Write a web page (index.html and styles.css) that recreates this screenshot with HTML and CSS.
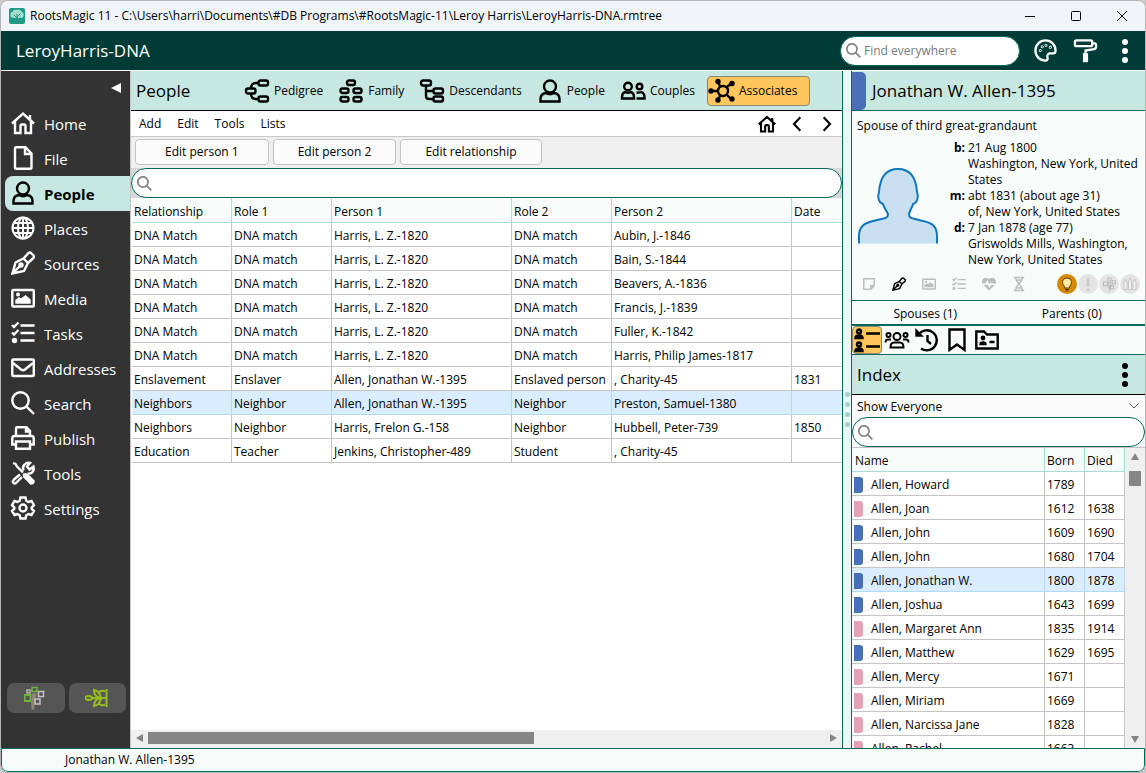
FILE: index.html
```html
<!DOCTYPE html>
<html lang="en">
<head>
    <meta charset="UTF-8">
    <meta name="viewport" content="width=device-width, initial-scale=1.0">
    <title>RootsMagic 11</title>
    <link rel="stylesheet" href="styles.css">
</head>
<body>

    <!-- Icons used more than once -->
    <svg class="symbols" aria-hidden="true">
        <symbol id="icon-search" viewBox="0 0 24 24">
            <circle cx="9.5" cy="9.5" r="8.2"/>
            <path d="M15.3 15.3 23 23"/>
        </symbol>
        <symbol id="icon-home" viewBox="0 0 24 24">
            <path d="M1 12.500 12 2.500 23 12.500M4 10.500V22H9.500V15Q9.500 13.500 11 13.500H13Q14.500 13.500 14.500 15V22H20V10.500M19 8.500V4"/>
        </symbol>
        <symbol id="icon-person" viewBox="0 0 24 24">
            <circle cx="12" cy="7.500" r="6"/>
            <path d="M8 14C4.500 14.500 2.500 16.500 2.500 20V22.500H21.500V20C21.500 16.500 19.500 14.500 16 14Q12 16.500 8 14Z"/>
        </symbol>
        <symbol id="icon-pen" viewBox="0 0 24 24">
            <path d="M1.500 22.500 4.500 11.500 12.500 7.500 17 12 13 20 1.500 22.500 9.500 14.500M12.500 7.500 17.500 2Q19 1 20.500 2.500L22.500 4.500Q23.500 6 22 7.500L17 12"/>
            <circle cx="10" cy="14" r="1.500"/>
        </symbol>
        <symbol id="icon-media" viewBox="0 0 24 24">
            <rect x="1.300" y="4" width="21.500" height="16.500" rx="1"/>
            <path class="solid" d="M5.500 16.500V14.500L8 12.500 10 14 14.500 10.500 18.500 14V16.500Z"/>
            <circle class="solid" cx="7" cy="8.500" r="0.800"/>
        </symbol>
        <symbol id="icon-tasks" viewBox="0 0 24 24">
            <path d="M9.500 4.500H23.500M9.500 12H23.500M9.500 19.500H23.500M1 4 3 6 7.500 1.500M1 11.500 3 13.500 7.500 9"/>
            <circle class="solid" cx="3.500" cy="19.500" r="1.500"/>
        </symbol>
        <symbol id="icon-tree" viewBox="0 0 24 24">
            <path d="M12 23V13M12 19 7 14M12 17 17 13"/>
            <rect x="9.500" y="1.500" width="5" height="5"/>
            <rect x="2.500" y="8" width="6" height="6"/>
            <rect x="10" y="9" width="4" height="4"/>
            <rect x="16.500" y="6" width="5" height="5"/>
            <rect x="13.500" y="14" width="5" height="5"/>
        </symbol>
    </svg>

    <div class="window">
        <header class="titlebar">
            <svg class="app-logo" viewBox="0 0 16 16">
                <rect width="16" height="16" rx="2" fill="#1f9a86"/>
                <path d="M1.500 8Q1 4 3.500 4 4 1 7.500 2 11 0.500 12.500 3.500 15.500 5 14.500 8 14 11 11 9.500 9 11 8 9 6 11 4.500 9.500 2 10.500 1.500 8Z" fill="#a5e0cf"/>
                <path d="M8 15V6M8 10 4.500 6.500M8 9 11.500 5.500M5.500 14.500H10.500" fill="none" stroke="#2c9080"/>
            </svg>
            <span class="titlebar-text">RootsMagic 11 - C:\Users\harri\Documents\#DB Programs\#RootsMagic-11\Leroy Harris\LeroyHarris-DNA.rmtree</span>
            <button class="window-button" aria-label="Minimize"><svg viewBox="0 0 12 12"><path d="M1 6.500H11"/></svg></button>
            <button class="window-button" aria-label="Maximize"><svg viewBox="0 0 12 12"><rect x="1.500" y="1.500" width="9" height="9" rx="1"/></svg></button>
            <button class="window-button" aria-label="Close"><svg viewBox="0 0 12 12"><path d="M1 1 11 11M11 1 1 11"/></svg></button>
        </header>

        <div class="appbar">
            <h1 class="database-name">LeroyHarris-DNA</h1>
            <div class="search-box find-everywhere">
                <svg class="icon"><use href="#icon-search"/></svg>
                <input type="text" aria-label="Find everywhere" placeholder="Find everywhere">
            </div>
            <button class="appbar-button" aria-label="Color theme">
                <svg class="icon" viewBox="0 0 24 24">
                    <path d="M12 1.500C6 1.500 1.500 6 1.500 12S6 22.500 12 22.500C14.500 22.500 14.500 20.500 14 19 13.500 16.500 15 15 17 15H20C22 15 22.500 13.500 22.500 12 22.500 6 18 1.500 12 1.500Z"/>
                    <circle cx="6.500" cy="12" r="0.400"/>
                    <circle cx="8.500" cy="8" r="0.400"/>
                    <circle cx="12.500" cy="6.500" r="0.400"/>
                    <circle cx="17" cy="8.500" r="0.400"/>
                </svg>
            </button>
            <button class="appbar-button" aria-label="Color coding">
                <svg class="icon" viewBox="0 0 24 24">
                    <rect x="1" y="1.500" width="18" height="6" rx="1.500"/>
                    <path d="M19 4.500H21.500Q23 4.500 23 6V8Q23 10 21 10.500L12 12V16"/>
                    <rect class="solid" x="10.500" y="16" width="3" height="7"/>
                </svg>
            </button>
            <button class="appbar-button" aria-label="Main menu">
                <svg class="dots" viewBox="0 0 8 26"><circle cx="4" cy="4" r="3"/><circle cx="4" cy="13" r="3"/><circle cx="4" cy="22" r="3"/></svg>
            </button>
        </div>

        <div class="workspace">
            <nav class="sidebar">
                <button class="collapse" aria-label="Collapse menu"></button>
                <a class="nav-item" href="#"><svg class="icon"><use href="#icon-home"/></svg>Home</a>
                <a class="nav-item" href="#"><svg class="icon" viewBox="0 0 24 24"><path d="M4 2.500Q4 1.300 5.200 1.300H14.500L20.500 7.500V21.500Q20.500 22.800 19 22.800H5.500Q4 22.800 4 21.500ZM14 1.500V8H20.500"/></svg>File</a>
                <a class="nav-item active" href="#"><svg class="icon"><use href="#icon-person"/></svg>People</a>
                <a class="nav-item" href="#"><svg class="icon globe" viewBox="0 0 24 24"><circle cx="12" cy="12" r="10.500"/><ellipse cx="12" cy="12" rx="5" ry="10.500"/><path d="M12 1.500V22.500M1.500 12H22.500M3 7H21M3 17H21"/></svg>Places</a>
                <a class="nav-item" href="#"><svg class="icon"><use href="#icon-pen"/></svg>Sources</a>
                <a class="nav-item" href="#"><svg class="icon"><use href="#icon-media"/></svg>Media</a>
                <a class="nav-item" href="#"><svg class="icon"><use href="#icon-tasks"/></svg>Tasks</a>
                <a class="nav-item" href="#"><svg class="icon" viewBox="0 0 24 24"><rect x="1.300" y="3.500" width="21.500" height="16.500" rx="1"/><path d="M2 7 10 13.500Q12 15 14 13.500L22 7"/></svg>Addresses</a>
                <a class="nav-item" href="#"><svg class="icon"><use href="#icon-search"/></svg>Search</a>
                <a class="nav-item" href="#"><svg class="icon" viewBox="0 0 24 24"><path d="M5 10V2.500Q5 1.300 6 1.300H15.500L19 5V10M5 18.500H1.300V12.500Q1.300 10 3.500 10H20.500Q22.700 10 22.700 12.500V18.500H19M5 15.500H19V22.700H5ZM15 2V5.500H19"/></svg>Publish</a>
                <a class="nav-item" href="#"><svg class="icon" viewBox="0 0 24 24"><path d="M9 13.500 3 18.500Q1 20.500 2.500 22 4 23.500 5.500 21.500L11 16M12.500 9.500Q11 6 13.500 3.500 16 1 19 2L16 5.500 18.500 8.500 22.500 5.500Q23.500 9 21 11.500 19 13 16.500 12.500"/><path d="M2 2 4.500 3 6 5.500 12 11.500"/><path class="solid" d="M13 13.500Q15 12.500 17 14.500L22.500 20Q22.500 22.500 20 22.500L14.500 17Q12.500 15.500 13 13.500Z"/></svg>Tools</a>
                <a class="nav-item" href="#"><svg class="icon" viewBox="0 0 24 24"><path d="M9.500 1.500H14.500L15.300 4.800 17.500 6 20.500 5 23 9.200 20.700 11.500V13L23 15 20.500 19 17.500 18 15.300 19.300 14.500 22.500H9.500L8.700 19.300 6.500 18 3.500 19 1 15 3.300 13V11.500L1 9.200 3.500 5 6.500 6 8.700 4.800Z"/><circle cx="12" cy="12" r="3.500"/></svg>Settings</a>
                <div class="sidebar-tools">
                    <button class="sidebar-button" aria-label="FamilySearch">
                        <svg viewBox="0 0 24 24" fill="none" stroke-width="1.500">
                            <path d="M9 23.500 8.500 15M9 17 10 8" stroke="#8f8478" stroke-width="3"/>
                            <rect x="8" y="1.500" width="5" height="4" stroke="#72b33c"/>
                            <rect x="3" y="4" width="3" height="3" stroke="#b5b0aa"/>
                            <rect x="0.500" y="9" width="6" height="6" stroke="#72b33c" stroke-width="2"/>
                            <rect x="8.500" y="8" width="3" height="3" stroke="#8f8478"/>
                            <rect x="14.500" y="5.500" width="5" height="5" stroke="#c8c6c3"/>
                            <rect x="11" y="13" width="5" height="5" stroke="#c8c6c3"/>
                        </svg>
                    </button>
                    <button class="sidebar-button" aria-label="Ancestry">
                        <svg viewBox="0 0 24 24" fill="none" stroke="#9abb20" stroke-width="2">
                            <path d="M21.500 3V21M8 12H21.500M-1 12Q4 8 8 12 4 16 -1 12ZM9 4Q15 5 16 12 9 11 9 4ZM9 20Q15 19 16 12 9 13 9 20ZM14 6Q17 4 20 5.500M14 18Q17 20 20 18.500"/>
                        </svg>
                    </button>
                </div>
            </nav>

            <main class="main-panel">
                <div class="view-bar">
                    <h2 class="panel-title">People</h2>
                    <div class="views">
                        <button class="view-button">
                            <svg class="icon" viewBox="0 0 24 24"><rect x="13.500" y="1.500" width="9.500" height="5" rx="2"/><rect x="1" y="9.500" width="9.500" height="5" rx="2"/><rect x="13.500" y="17.500" width="9.500" height="5" rx="2"/><path d="M13.500 4H11Q6 4 6 9.500M6 14.500Q6 20 11 20H13.500"/></svg>
                            Pedigree
                        </button>
                        <button class="view-button">
                            <svg class="icon" viewBox="0 0 24 24"><rect x="8" y="1.500" width="8" height="4.500" rx="2"/><rect x="1.500" y="9.500" width="8" height="4.500" rx="2"/><rect x="14.500" y="9.500" width="8" height="4.500" rx="2"/><rect x="1.500" y="18" width="8" height="4.500" rx="2"/><rect x="14.500" y="18" width="8" height="4.500" rx="2"/></svg>
                            Family
                        </button>
                        <button class="view-button">
                            <svg class="icon" viewBox="0 0 24 24"><rect x="1" y="1.500" width="10" height="5" rx="2"/><rect x="13.500" y="9.500" width="9.500" height="5" rx="2"/><rect x="13.500" y="17.500" width="9.500" height="5" rx="2"/><path d="M6 6.500V17Q6 20 9 20H13.500M6 12H13.500"/></svg>
                            Descendants
                        </button>
                        <button class="view-button">
                            <svg class="icon"><use href="#icon-person"/></svg>
                            People
                        </button>
                        <button class="view-button">
                            <svg class="icon" viewBox="0 0 24 24"><circle cx="7" cy="7.500" r="3.800"/><path d="M4.500 13Q1 14 1 18V19.500H13V18Q13 14 9.500 13 7 14.500 4.500 13Z"/><circle cx="18.500" cy="7.500" r="2.800"/><path d="M15.500 13.500Q18 14 20.500 13 23.500 14.500 23.500 18V19.500H15.500"/></svg>
                            Couples
                        </button>
                        <button class="view-button selected">
                            <svg class="icon" viewBox="0 0 24 24"><circle cx="13" cy="12" r="5"/><path d="M1 12H8M10.500 8 8 3M16.500 8.500 21 4.500M16.500 15.500 21 20M10.500 16 8 21"/><g class="solid"><circle cx="1" cy="12" r="1.500"/><circle cx="8" cy="2.500" r="1.500"/><circle cx="22" cy="4.500" r="1.500"/><circle cx="22" cy="20" r="1.500"/><circle cx="8" cy="21" r="1.500"/></g></svg>
                            Associates
                        </button>
                    </div>
                </div>

                <div class="menu-bar">
                    <button class="menu-item">Add</button>
                    <button class="menu-item">Edit</button>
                    <button class="menu-item">Tools</button>
                    <button class="menu-item">Lists</button>
                    <div class="history">
                        <button class="history-button" aria-label="Home person"><svg class="icon"><use href="#icon-home"/></svg></button>
                        <button class="history-button" aria-label="Back"><svg class="icon" viewBox="0 0 24 24"><path d="M16.500 3 8 12 16.500 21"/></svg></button>
                        <button class="history-button" aria-label="Forward"><svg class="icon" viewBox="0 0 24 24"><path d="M7.500 3 16 12 7.500 21"/></svg></button>
                    </div>
                </div>

                <div class="toolbar">
                    <button class="tool-button">Edit person 1</button>
                    <button class="tool-button">Edit person 2</button>
                    <button class="tool-button">Edit relationship</button>
                </div>

                <div class="search-row">
                    <div class="search-box">
                        <svg class="icon"><use href="#icon-search"/></svg>
                        <input type="text" aria-label="Search associates">
                    </div>
                </div>

                <div class="grid-area">
                    <table class="data-grid">
                        <colgroup>
                            <col class="col-role"><col class="col-role"><col class="col-person"><col class="col-role"><col class="col-person"><col>
                        </colgroup>
                        <thead>
                            <tr><th>Relationship</th><th>Role 1</th><th>Person 1</th><th>Role 2</th><th>Person 2</th><th>Date</th></tr>
                        </thead>
                        <tbody>
                            <tr><td>DNA Match</td><td>DNA match</td><td>Harris, L. Z.-1820</td><td>DNA match</td><td>Aubin, J.-1846</td><td></td></tr>
                            <tr><td>DNA Match</td><td>DNA match</td><td>Harris, L. Z.-1820</td><td>DNA match</td><td>Bain, S.-1844</td><td></td></tr>
                            <tr><td>DNA Match</td><td>DNA match</td><td>Harris, L. Z.-1820</td><td>DNA match</td><td>Beavers, A.-1836</td><td></td></tr>
                            <tr><td>DNA Match</td><td>DNA match</td><td>Harris, L. Z.-1820</td><td>DNA match</td><td>Francis, J.-1839</td><td></td></tr>
                            <tr><td>DNA Match</td><td>DNA match</td><td>Harris, L. Z.-1820</td><td>DNA match</td><td>Fuller, K.-1842</td><td></td></tr>
                            <tr><td>DNA Match</td><td>DNA match</td><td>Harris, L. Z.-1820</td><td>DNA match</td><td>Harris, Philip James-1817</td><td></td></tr>
                            <tr><td>Enslavement</td><td>Enslaver</td><td>Allen, Jonathan W.-1395</td><td>Enslaved person</td><td>, Charity-45</td><td>1831</td></tr>
                            <tr class="selected"><td>Neighbors</td><td>Neighbor</td><td>Allen, Jonathan W.-1395</td><td>Neighbor</td><td>Preston, Samuel-1380</td><td></td></tr>
                            <tr><td>Neighbors</td><td>Neighbor</td><td>Harris, Frelon G.-158</td><td>Neighbor</td><td>Hubbell, Peter-739</td><td>1850</td></tr>
                            <tr><td>Education</td><td>Teacher</td><td>Jenkins, Christopher-489</td><td>Student</td><td>, Charity-45</td><td></td></tr>
                        </tbody>
                    </table>
                </div>

                <div class="scrollbar horizontal">
                    <span class="arrow left"></span>
                    <div class="track"><div class="thumb"></div></div>
                    <span class="arrow right"></span>
                </div>
            </main>

            <div class="splitter"><i></i><i></i><i></i><i></i></div>

            <aside class="side-panel">
                <div class="person-header">
                    <h2 class="panel-title">Jonathan W. Allen-1395</h2>
                </div>

                <section class="person-card">
                    <p class="kinship">Spouse of third great-grandaunt</p>
                    <div class="person-details">
                        <svg class="avatar" viewBox="0 0 82 78">
                            <path d="M2 77.500V70C2 60 8 57 16 55 27 52 31 53 31 48 29 44 27 42 26 38 22 37 20 31 22 26 23 11 29 3 41 3S59 11 60 26C62 31 60 37 56 38 55 42 53 44 52 48 52 53 56 52 66 55 75 57 80 60 80 70V77.500" fill="#c8e0f0" stroke="#0e76bc" stroke-width="2"/>
                        </svg>
                        <dl class="facts">
                            <dt>b:</dt><dd>21 Aug 1800<br>Washington, New York, United States</dd>
                            <dt>m:</dt><dd>abt 1831 (about age 31)<br>of, New York, United States</dd>
                            <dt>d:</dt><dd>7 Jan 1878 (age 77)<br>Griswolds Mills, Washington, New York, United States</dd>
                        </dl>
                    </div>
                    <div class="badges">
                        <button class="badge" aria-label="Notes"><svg class="icon" viewBox="0 0 24 24"><path d="M3 3H21V15L15 21H3ZM21 15H15V21"/></svg></button>
                        <button class="badge on" aria-label="Sources"><svg class="icon"><use href="#icon-pen"/></svg></button>
                        <button class="badge" aria-label="Media"><svg class="icon"><use href="#icon-media"/></svg></button>
                        <button class="badge" aria-label="Tasks"><svg class="icon"><use href="#icon-tasks"/></svg></button>
                        <button class="badge" aria-label="Health"><svg class="icon" viewBox="0 0 24 24"><path class="solid" d="M12 21.500 3 13C-1 8 2 2.500 6.500 2.500 9 2.500 11 4 12 6 13 4 15 2.500 17.500 2.500 22 2.500 25 8 21 13Z"/><path class="pulse" d="M1 12.500H7L9 8 12.500 16 15 11 16 12.500H23"/></svg></button>
                        <button class="badge" aria-label="DNA"><svg class="icon" viewBox="0 0 24 24"><path d="M3 1H21M3 23H21M6 1C6 9 18 14 18 23M18 1C18 9 6 14 6 23M8 5H16M8 19H16"/></svg></button>
                        <span class="hints">
                            <button class="hint on" aria-label="Hints"><svg viewBox="0 0 20 20"><path d="M7.500 12.500Q5 10 5.500 7.500 6 4 10 4T14.500 7.500Q15 10 12.500 12.500V14H7.500Z" fill="#ffe9a0" stroke="#5e3d00"/><path d="M8 15.500H12M8.500 17H11.500" stroke="#5e3d00"/></svg></button>
                            <button class="hint" aria-label="Alerts"><svg viewBox="0 0 20 20"><path d="M10 4V12.500M10 14.500V16.500" stroke="#c9c9c9" stroke-width="2.500"/></svg></button>
                            <button class="hint" aria-label="FamilySearch"><svg class="hint-tree"><use href="#icon-tree"/></svg></button>
                            <button class="hint" aria-label="Records"><svg viewBox="0 0 20 20"><path d="M4 15.500V8L5.500 5 7 8V15.500ZM8.500 15.500V7L10 4 11.500 7V15.500ZM13 15.500V8L14.500 5 16 8V15.500Z" fill="#f2f2f2" stroke="#c4c4c4"/></svg></button>
                        </span>
                    </div>
                </section>

                <div class="relatives">
                    <button>Spouses (1)</button>
                    <button>Parents (0)</button>
                </div>

                <div class="side-tabs">
                    <button class="side-tab selected" aria-label="Index"><svg class="icon" viewBox="0 0 24 24"><circle cx="4" cy="3.500" r="2"/><path d="M0.500 10Q0.500 7.500 4 7.500T7.500 10ZM11 5.500H25M11 18.500H25"/><circle cx="4" cy="16.500" r="2"/><path d="M0.500 23Q0.500 20.500 4 20.500T7.500 23Z"/></svg></button>
                    <button class="side-tab" aria-label="Groups"><svg class="icon groups" viewBox="0 0 24 24"><circle cx="12" cy="8.500" r="3.500"/><circle cx="3.500" cy="7" r="2"/><circle cx="20.500" cy="7" r="2"/><path d="M5.500 19.500Q5.500 14.500 9 14.500H15Q18.500 14.500 18.500 19.500ZM0.500 14.500Q0.500 11.500 3 11.500H6M23.500 14.500Q23.500 11.500 21 11.500H18"/></svg></button>
                    <button class="side-tab" aria-label="History"><svg class="icon" viewBox="0 0 24 24"><path d="M4 6A10 10 0 1 1 6 20.500M12.500 7V13L16 16"/><path class="solid" d="M1.500 3V7.500H6Z"/></svg></button>
                    <button class="side-tab" aria-label="Bookmarks"><svg class="icon" viewBox="0 0 24 24"><path d="M4.500 1.500H19.500V22L12 16.500 4.500 22Z"/></svg></button>
                    <button class="side-tab" aria-label="File groups"><svg class="icon" viewBox="0 0 24 24"><path d="M1.300 3.500H9L12 6.500H22.700V20.500H1.300ZM14.500 14H19.500"/><circle class="solid" cx="8" cy="10" r="1.200"/><path class="solid" d="M5.500 16Q5.500 14.500 8 14.500T10.500 16Z"/></svg></button>
                </div>

                <div class="index-header">
                    <h2 class="panel-title">Index</h2>
                    <button class="index-menu" aria-label="Index menu"><svg class="dots" viewBox="0 0 8 26"><circle cx="4" cy="4" r="3"/><circle cx="4" cy="13" r="3"/><circle cx="4" cy="22" r="3"/></svg></button>
                </div>

                <div class="filter">
                    <select class="filter-select" aria-label="Filter people">
                        <option>Show Everyone</option>
                    </select>
                    <svg class="filter-arrow" viewBox="0 0 10 6"><path d="M0.500 0.500 5 5 9.500 0.500"/></svg>
                </div>

                <div class="search-box">
                    <svg class="icon"><use href="#icon-search"/></svg>
                    <input type="text" aria-label="Search index">
                </div>

                <div class="index-list">
                    <div class="index-rows">
                        <table class="data-grid index-grid">
                            <colgroup><col><col class="col-year"><col class="col-year"></colgroup>
                            <thead>
                                <tr><th>Name</th><th>Born</th><th>Died</th></tr>
                            </thead>
                            <tbody>
                                <tr><td class="male">Allen, Howard</td><td>1789</td><td></td></tr>
                                <tr><td class="female">Allen, Joan</td><td>1612</td><td>1638</td></tr>
                                <tr><td class="male">Allen, John</td><td>1609</td><td>1690</td></tr>
                                <tr><td class="male">Allen, John</td><td>1680</td><td>1704</td></tr>
                                <tr class="selected"><td class="male">Allen, Jonathan W.</td><td>1800</td><td>1878</td></tr>
                                <tr><td class="male">Allen, Joshua</td><td>1643</td><td>1699</td></tr>
                                <tr><td class="female">Allen, Margaret Ann</td><td>1835</td><td>1914</td></tr>
                                <tr><td class="male">Allen, Matthew</td><td>1629</td><td>1695</td></tr>
                                <tr><td class="female">Allen, Mercy</td><td>1671</td><td></td></tr>
                                <tr><td class="female">Allen, Miriam</td><td>1669</td><td></td></tr>
                                <tr><td class="female">Allen, Narcissa Jane</td><td>1828</td><td></td></tr>
                                <tr><td class="female">Allen, Rachel</td><td>1663</td><td></td></tr>
                            </tbody>
                        </table>
                    </div>
                    <div class="scrollbar vertical">
                        <span class="arrow up"></span>
                        <div class="track"><div class="thumb"></div></div>
                        <span class="arrow down"></span>
                    </div>
                </div>
            </aside>
        </div>

        <footer class="status-bar">Jonathan W. Allen-1395</footer>
    </div>

</body>
</html>
```
FILE: styles.css
```css
* {
    box-sizing: border-box;
}

body {
    margin: 0;
    background: #c9c9c9;
    font-family: "Open Sans", "Noto Sans", sans-serif;
    font-size: 12px;
    line-height: 16px;
    color: #000;
}

button,
input,
select {
    font: inherit;
    color: inherit;
}

button {
    padding: 0;
    border: none;
    background: none;
    cursor: pointer;
}

a {
    color: inherit;
    text-decoration: none;
}

.symbols {
    display: none;
}

/* Line icons take their colour from the text around them */
.icon {
    width: 24px;
    height: 24px;
    flex-shrink: 0;
    fill: none;
    stroke: currentColor;
    stroke-width: 2.4;
    overflow: visible;
}

.solid {
    fill: currentColor;
}

.window {
    display: flex;
    flex-direction: column;
    height: 100vh;
    border: 1px solid #b4b4b4;
    border-radius: 8px;
    overflow: hidden;
    background: #fff;
}

/* Title bar */
.titlebar {
    display: flex;
    align-items: center;
    height: 30px;
    padding-left: 8px;
    background: #eff4f9;
}

.app-logo {
    width: 16px;
    height: 16px;
    margin-right: 5px;
}

.titlebar-text {
    flex: 1;
    white-space: nowrap;
}

.window-button {
    display: flex;
    align-items: center;
    justify-content: center;
    width: 46px;
    height: 30px;
}

.window-button svg {
    width: 12px;
    height: 12px;
    fill: none;
    stroke: #000;
}

/* Dark green bar */
.appbar {
    display: flex;
    align-items: center;
    height: 40px;
    padding: 0 6px 0 15px;
    border-bottom: 1px solid #fff;
    background: #003b35;
    color: #fff;
}

.database-name {
    flex: 1;
    margin: 0;
    font-size: 17px;
    font-weight: normal;
    line-height: 24px;
}

.search-box {
    display: flex;
    align-items: center;
    gap: 3px;
    height: 30px;
    padding: 0 8px 0 5px;
    border: 1px solid #00695c;
    border-radius: 15px;
    background: #fff;
    color: #000;
}

.search-box .icon {
    width: 15px;
    height: 15px;
    color: #858585;
    stroke-width: 2.8;
}

.search-box input {
    flex: 1;
    min-width: 0;
    padding: 0;
    border: none;
    outline: none;
    background: none;
}

.search-box input::placeholder {
    color: #7a7a7a;
}

.find-everywhere {
    width: 180px;
    margin-right: 11px;
}

.appbar-button {
    display: flex;
    align-items: center;
    justify-content: center;
    width: 28px;
    margin-right: 12px;
}

.appbar-button:last-child {
    margin-right: 0;
}

.appbar-button .icon {
    width: 23px;
    height: 23px;
}

.dots {
    width: 8px;
    height: 26px;
    fill: currentColor;
}

.workspace {
    display: flex;
    flex: 1;
    min-height: 0;
}

/* Left navigation */
.sidebar {
    display: flex;
    flex-direction: column;
    width: 129px;
    flex-shrink: 0;
    background: #333;
    color: #fff;
}

.collapse {
    align-self: flex-end;
    width: 10px;
    height: 10px;
    margin: 12px 9px 13px 0;
    border: 5px solid transparent;
    border-left-width: 0;
    border-right: 10px solid #fff;
}

.nav-item {
    display: flex;
    align-items: center;
    gap: 9px;
    height: 35px;
    margin-left: 4px;
    padding-left: 6px;
    font-size: 15px;
    line-height: 20px;
}

.nav-item .icon {
    margin-bottom: 2px;
}

.nav-item.active {
    border-radius: 8px 0 0 8px;
    background: #c7e8e1;
    color: #000;
    font-weight: bold;
}

.icon.globe {
    stroke-width: 2;
}

.sidebar-tools {
    display: flex;
    gap: 4px;
    margin: auto 4px 35px 6px;
}

.sidebar-button {
    display: flex;
    align-items: center;
    justify-content: center;
    flex: 1;
    height: 30px;
    border-radius: 7px;
    background: #555;
}

.sidebar-button svg {
    width: 24px;
    height: 24px;
}

/* Main panel */
.main-panel {
    display: flex;
    flex-direction: column;
    flex: 1;
    min-width: 0;
    border-left: 1px solid #c4c4c4;
}

.panel-title {
    margin: 0;
    font-size: 17px;
    font-weight: normal;
    line-height: 24px;
    white-space: nowrap;
}

.view-bar {
    display: flex;
    align-items: center;
    height: 40px;
    padding-left: 5px;
    border-bottom: 1px solid #000;
    background: #c7e8e1;
}

.view-bar .panel-title {
    width: 105px;
}

.views {
    display: flex;
    gap: 8px;
}

.view-button {
    display: flex;
    align-items: center;
    gap: 5px;
    height: 30px;
    padding: 0 3px;
    border: 1px solid transparent;
    border-radius: 4px;
}

.view-button.selected {
    padding: 0 12px 0 2px;
    border-color: #8e8570;
    background: #ffc65c;
}

.menu-bar {
    display: flex;
    align-items: center;
    gap: 16px;
    height: 25px;
    padding: 0 6px 0 8px;
}

.history {
    display: flex;
    gap: 12px;
    margin-left: auto;
}

.history-button {
    display: flex;
    align-items: center;
    justify-content: center;
    width: 18px;
}

.history-button .icon {
    width: 18px;
    height: 18px;
    stroke-width: 2.8;
}

.toolbar {
    display: flex;
    gap: 4px;
    height: 32px;
    padding: 2px 4px;
    border-top: 1px solid #c8c8c8;
    background: #efefef;
}

.tool-button {
    height: 26px;
    padding: 0 24px;
    border: 1px solid #c4c4c4;
    border-radius: 4px;
    background: #fbfbfb;
}

.tool-button:first-child {
    padding: 0 29px;
}

.search-row {
    background: #d8d8d8;
}

.grid-area {
    flex: 1;
    min-height: 0;
    padding-left: 1px;
    overflow: hidden;
}

/* Tables */
.data-grid {
    width: 100%;
    table-layout: fixed;
    border-collapse: separate;
    border-spacing: 0;
}

.data-grid th,
.data-grid td {
    height: 24px;
    padding: 2px 2px 0;
    border-right: 1px solid #c4c4c4;
    border-bottom: 1px solid #c4c4c4;
    font-weight: normal;
    text-align: left;
    white-space: nowrap;
    overflow: hidden;
}

.data-grid th {
    height: 25px;
    padding-top: 3px;
    border-color: #a9dcd3;
    background: #f7fcfa;
}

.data-grid .selected td {
    border-color: #b3daf5;
    background: #d9edff;
}

.main-panel .data-grid th:last-child,
.main-panel .data-grid td:last-child {
    border-right: none;
}

.col-role {
    width: 100px;
}

.col-person {
    width: 180px;
}

.col-year {
    width: 40px;
}

/* Scroll bars */
.scrollbar {
    display: flex;
    align-items: center;
    background: #efefef;
}

.scrollbar.horizontal {
    height: 18px;
    padding: 0 5px 2px;
    gap: 5px;
}

.scrollbar.vertical {
    flex-direction: column;
    width: 20px;
    padding: 5px 0;
    gap: 8px;
}

.track {
    flex: 1;
}

.thumb {
    background: #858585;
}

.horizontal .thumb {
    width: 57%;
    height: 12px;
}

.vertical .thumb {
    width: 12px;
    height: 15px;
    margin-top: 3px;
}

.arrow {
    border: 4px solid transparent;
}

.arrow.left {
    border-left: none;
    border-right: 7px solid #858585;
}

.arrow.right {
    border-right: none;
    border-left: 7px solid #858585;
}

.arrow.up {
    border-top: none;
    border-bottom: 7px solid #858585;
}

.arrow.down {
    border-bottom: none;
    border-top: 7px solid #858585;
}

.splitter {
    display: flex;
    flex-direction: column;
    align-items: center;
    justify-content: center;
    gap: 5px;
    width: 10px;
    border: 1px solid #00695c;
    border-width: 0 1px;
    background: #eaf7f5;
}

.splitter i {
    width: 5px;
    height: 5px;
    border-radius: 50%;
    background: #a9cfc8;
}

/* Right panel */
.side-panel {
    display: flex;
    flex-direction: column;
    width: 293px;
    flex-shrink: 0;
    background: #f7fcfa;
}

.person-header {
    display: flex;
    align-items: center;
    gap: 6px;
    height: 40px;
    border-bottom: 1px solid #00695c;
    background: #c7e8e1;
}

.person-header::before {
    content: "";
    width: 14px;
    height: 38px;
    border-radius: 0 5px 5px 0;
    background: #486fb8;
}

.person-card {
    padding: 7px 5px 6px;
}

.kinship {
    margin: 0 0 6px;
}

.person-details {
    display: flex;
    align-items: flex-start;
    gap: 8px;
}

.avatar {
    width: 82px;
    height: 78px;
    margin-top: 26px;
    flex-shrink: 0;
}

.facts {
    display: grid;
    grid-template-columns: 18px 1fr;
    column-gap: 3px;
    margin: 0;
}

.facts dt {
    font-weight: bold;
    text-align: right;
}

.facts dd {
    margin: 0;
}

.badges {
    display: flex;
    align-items: center;
    gap: 16px;
    margin-top: 6px;
    padding-left: 5px;
    color: #bdbdbd;
}

.badge {
    display: flex;
    width: 14px;
}

.badge.on {
    color: #000;
}

.badge .icon {
    width: 14px;
    height: 14px;
    stroke-width: 2.5;
}

.badge .pulse {
    stroke: #f7fcfa;
}

.hints {
    display: flex;
    gap: 1px;
    margin-left: auto;
}

.hint {
    display: flex;
    align-items: center;
    justify-content: center;
    width: 20px;
    height: 20px;
    border-radius: 50%;
    background: #e4e4e4;
}

.hint.on {
    background: #d48806;
}

.hint svg {
    width: 20px;
    height: 20px;
    fill: none;
}

.hint .hint-tree {
    width: 15px;
    height: 15px;
    stroke: #b8b8b8;
    stroke-width: 1.5;
}

.relatives {
    display: flex;
    height: 26px;
    border-top: 1px solid #00695c;
    border-bottom: 2px solid #00695c;
}

.relatives button {
    flex: 1;
    padding-top: 2px;
}

.side-tabs {
    display: flex;
    height: 29px;
    border-bottom: 1px solid #00695c;
}

.side-tab {
    display: flex;
    align-items: center;
    justify-content: center;
    width: 30px;
    border: 1px solid transparent;
    border-radius: 4px;
}

.side-tab.selected {
    border-color: #8e8570;
    background: #ffc65c;
}

.side-tab .groups {
    stroke-width: 2;
}

.index-header {
    display: flex;
    align-items: center;
    justify-content: space-between;
    height: 40px;
    padding: 0 16px 0 5px;
    border-bottom: 1px solid #000;
    background: #c7e8e1;
}

.index-menu {
    display: flex;
}

.filter {
    display: flex;
    align-items: center;
    height: 22px;
    padding-right: 6px;
    background: #fbfbfb;
}

.filter-select {
    flex: 1;
    padding: 2px 5px 0;
    border: none;
    background: none;
    appearance: none;
}

.filter-arrow {
    width: 10px;
    height: 6px;
    fill: none;
    stroke: #555;
}

.index-list {
    display: flex;
    flex: 1;
    min-height: 0;
    border-top: 1px solid #c4c4c4;
}

.index-rows {
    flex: 1;
    overflow: hidden;
    background: #fff;
}

.index-grid th {
    height: 24px;
}

.index-grid th:first-child {
    padding-left: 3px;
}

/* Coloured marker in front of each name */
.index-grid .male::before,
.index-grid .female::before {
    content: "";
    display: inline-block;
    width: 9px;
    height: 16px;
    margin-right: 8px;
    border-radius: 0 3px 3px 0;
    background: #486fb8;
    vertical-align: top;
}

.index-grid .female::before {
    background: #e6a1b4;
}

/* Bottom bar */
.status-bar {
    height: 24px;
    padding: 3px 63px;
    border: 1px solid #00695c;
    border-radius: 0 0 7px 7px;
    background: #f7fcfa;
}
```
